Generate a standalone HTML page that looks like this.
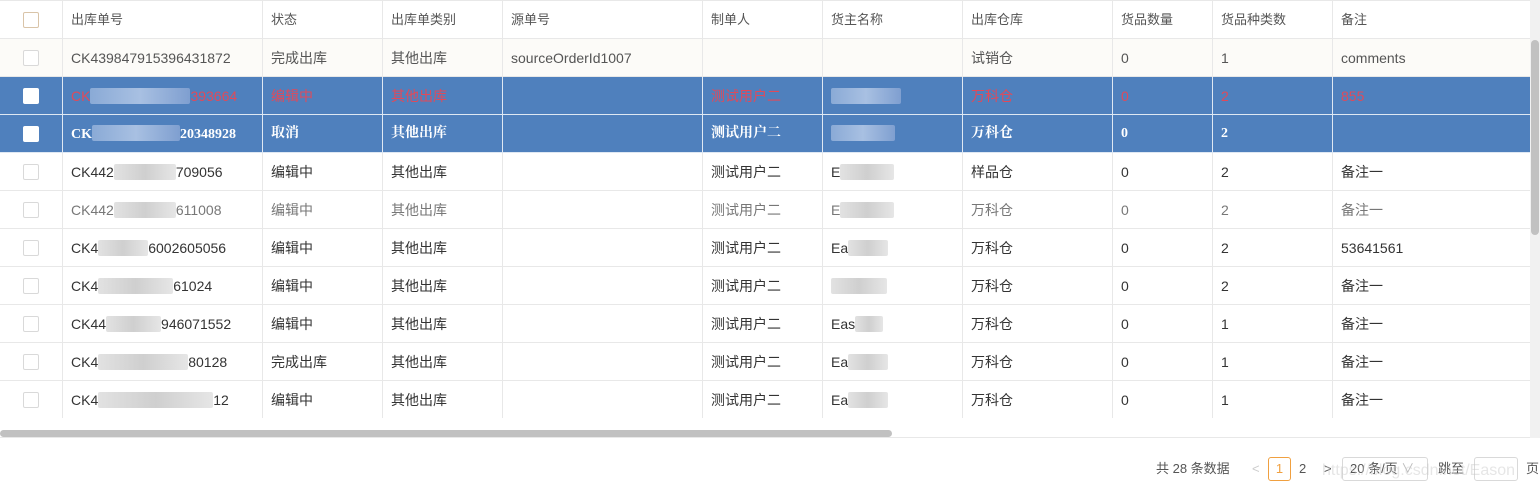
<!DOCTYPE html>
<html><head><meta charset="utf-8"><style>
*{margin:0;padding:0;box-sizing:border-box}
body{width:1540px;height:487px;background:#fff;font-family:"Liberation Sans","Noto Sans CJK SC",sans-serif;font-size:14px;color:#333;position:relative;overflow:hidden}
table{border-collapse:collapse;position:absolute;left:-1px;top:0;table-layout:fixed;width:1531px}
td{height:38px;border:1px solid #e8e8e8;padding:0 8px;white-space:nowrap;overflow:hidden;vertical-align:middle;line-height:1}
tr.h td{background:#fff;color:#555;font-size:13px}
tr.f td{background:#fcfbf8;color:#555}
tr.b td{background:#4f80bd;border-color:#dfe8f3}
tr.b1 td{color:#e04a5a}
tr.b2 td{color:#fff;font-weight:bold;font-family:"Liberation Serif","Noto Serif CJK SC",serif}
tr.g td{color:#777}
.cb{width:16px;height:16px;border:1px solid #d9d9d9;border-radius:2px;background:#fff;margin:0 auto}
.h .cb{border-color:#d9c4a8}
tr.b .cb{border:none}
.bl{display:inline-block;height:16px;vertical-align:-3px;background:linear-gradient(90deg,#e2e2e2,#cfcfcf,#e6e6e6);border-radius:2px}
tr.b .bl{background:linear-gradient(90deg,#8aaad6,#a8c0e2,#7f9fd0)}
td:first-child{padding:0;text-align:center}
</style></head><body>
<table>
<colgroup><col style="width:63px"><col style="width:200px"><col style="width:120px"><col style="width:120px"><col style="width:200px"><col style="width:120px"><col style="width:140px"><col style="width:150px"><col style="width:100px"><col style="width:120px"><col style="width:198px"></colgroup>
<tr class="h"><td><div class="cb"></div></td><td>出库单号</td><td>状态</td><td>出库单类别</td><td>源单号</td><td>制单人</td><td>货主名称</td><td>出库仓库</td><td>货品数量</td><td>货品种类数</td><td>备注</td></tr>
<tr class="f"><td><div class="cb"></div></td><td>CK439847915396431872</td><td>完成出库</td><td>其他出库</td><td>sourceOrderId1007</td><td></td><td></td><td>试销仓</td><td>0</td><td>1</td><td>comments</td></tr>
<tr class="b b1"><td><div class="cb"></div></td><td>CK<span class="bl" style="width:100px"></span>393664</td><td>编辑中</td><td>其他出库</td><td></td><td>测试用户二</td><td><span class="bl" style="width:70px"></span></td><td>万科仓</td><td>0</td><td>2</td><td>855</td></tr>
<tr class="b b2"><td><div class="cb"></div></td><td>CK<span class="bl" style="width:88px"></span>20348928</td><td>取消</td><td>其他出库</td><td></td><td>测试用户二</td><td><span class="bl" style="width:64px"></span></td><td>万科仓</td><td>0</td><td>2</td><td></td></tr>
<tr><td><div class="cb"></div></td><td>CK442<span class="bl" style="width:62px"></span>709056</td><td>编辑中</td><td>其他出库</td><td></td><td>测试用户二</td><td>E<span class="bl" style="width:54px"></span></td><td>样品仓</td><td>0</td><td>2</td><td>备注一</td></tr>
<tr class="g"><td><div class="cb"></div></td><td>CK442<span class="bl" style="width:62px"></span>611008</td><td>编辑中</td><td>其他出库</td><td></td><td>测试用户二</td><td>E<span class="bl" style="width:54px"></span></td><td>万科仓</td><td>0</td><td>2</td><td>备注一</td></tr>
<tr><td><div class="cb"></div></td><td>CK4<span class="bl" style="width:50px"></span>6002605056</td><td>编辑中</td><td>其他出库</td><td></td><td>测试用户二</td><td>Ea<span class="bl" style="width:40px"></span></td><td>万科仓</td><td>0</td><td>2</td><td>53641561</td></tr>
<tr><td><div class="cb"></div></td><td>CK4<span class="bl" style="width:75px"></span>61024</td><td>编辑中</td><td>其他出库</td><td></td><td>测试用户二</td><td><span class="bl" style="width:56px"></span></td><td>万科仓</td><td>0</td><td>2</td><td>备注一</td></tr>
<tr><td><div class="cb"></div></td><td>CK44<span class="bl" style="width:55px"></span>946071552</td><td>编辑中</td><td>其他出库</td><td></td><td>测试用户二</td><td>Eas<span class="bl" style="width:28px"></span></td><td>万科仓</td><td>0</td><td>1</td><td>备注一</td></tr>
<tr><td><div class="cb"></div></td><td>CK4<span class="bl" style="width:90px"></span>80128</td><td>完成出库</td><td>其他出库</td><td></td><td>测试用户二</td><td>Ea<span class="bl" style="width:40px"></span></td><td>万科仓</td><td>0</td><td>1</td><td>备注一</td></tr>
<tr><td><div class="cb"></div></td><td>CK4<span class="bl" style="width:115px"></span>12</td><td>编辑中</td><td>其他出库</td><td></td><td>测试用户二</td><td>Ea<span class="bl" style="width:40px"></span></td><td>万科仓</td><td>0</td><td>1</td><td>备注一</td></tr>
</table>
<div style="position:absolute;left:0;top:418px;width:1530px;height:20px;background:#fff;border-bottom:1px solid #e8e8e8"></div>
<div style="position:absolute;left:0;top:430px;width:892px;height:7px;border-radius:4px;background:#c1c1c1"></div>
<div style="position:absolute;left:1530px;top:0;width:10px;height:438px;background:#f1f1f1"></div>
<div style="position:absolute;left:1531px;top:40px;width:8px;height:195px;border-radius:4px;background:#c1c1c1"></div>
<div style="position:absolute;top:457px;left:1156px;height:24px;line-height:24px;font-size:13px;color:#555;white-space:nowrap">
<span style="position:absolute;left:0">共 28 条数据</span>
<span style="position:absolute;left:96px;color:#ccc">&lt;</span>
<span style="position:absolute;left:112px;top:0;width:23px;height:24px;border:1px solid #f0a040;border-radius:3px;color:#f0a040;text-align:center;line-height:22px">1</span>
<span style="position:absolute;left:143px">2</span>
<span style="position:absolute;left:168px;color:#555">&gt;</span>
<span style="position:absolute;left:186px;top:0;width:86px;height:24px;border:1px solid #d9d9d9;border-radius:3px;padding-left:7px;line-height:22px">20 条/页 <span style="color:#bbb">∨</span></span>
<span style="position:absolute;left:282px">跳至</span>
<span style="position:absolute;left:318px;top:0;width:44px;height:24px;border:1px solid #d9d9d9;border-radius:3px"></span>
<span style="position:absolute;left:370px">页</span>
</div>
<div style="position:absolute;left:1322px;top:462px;font-size:16px;color:rgba(200,200,200,.45);white-space:nowrap">https://blog.csdn.net/Eason</div>
</body></html>
